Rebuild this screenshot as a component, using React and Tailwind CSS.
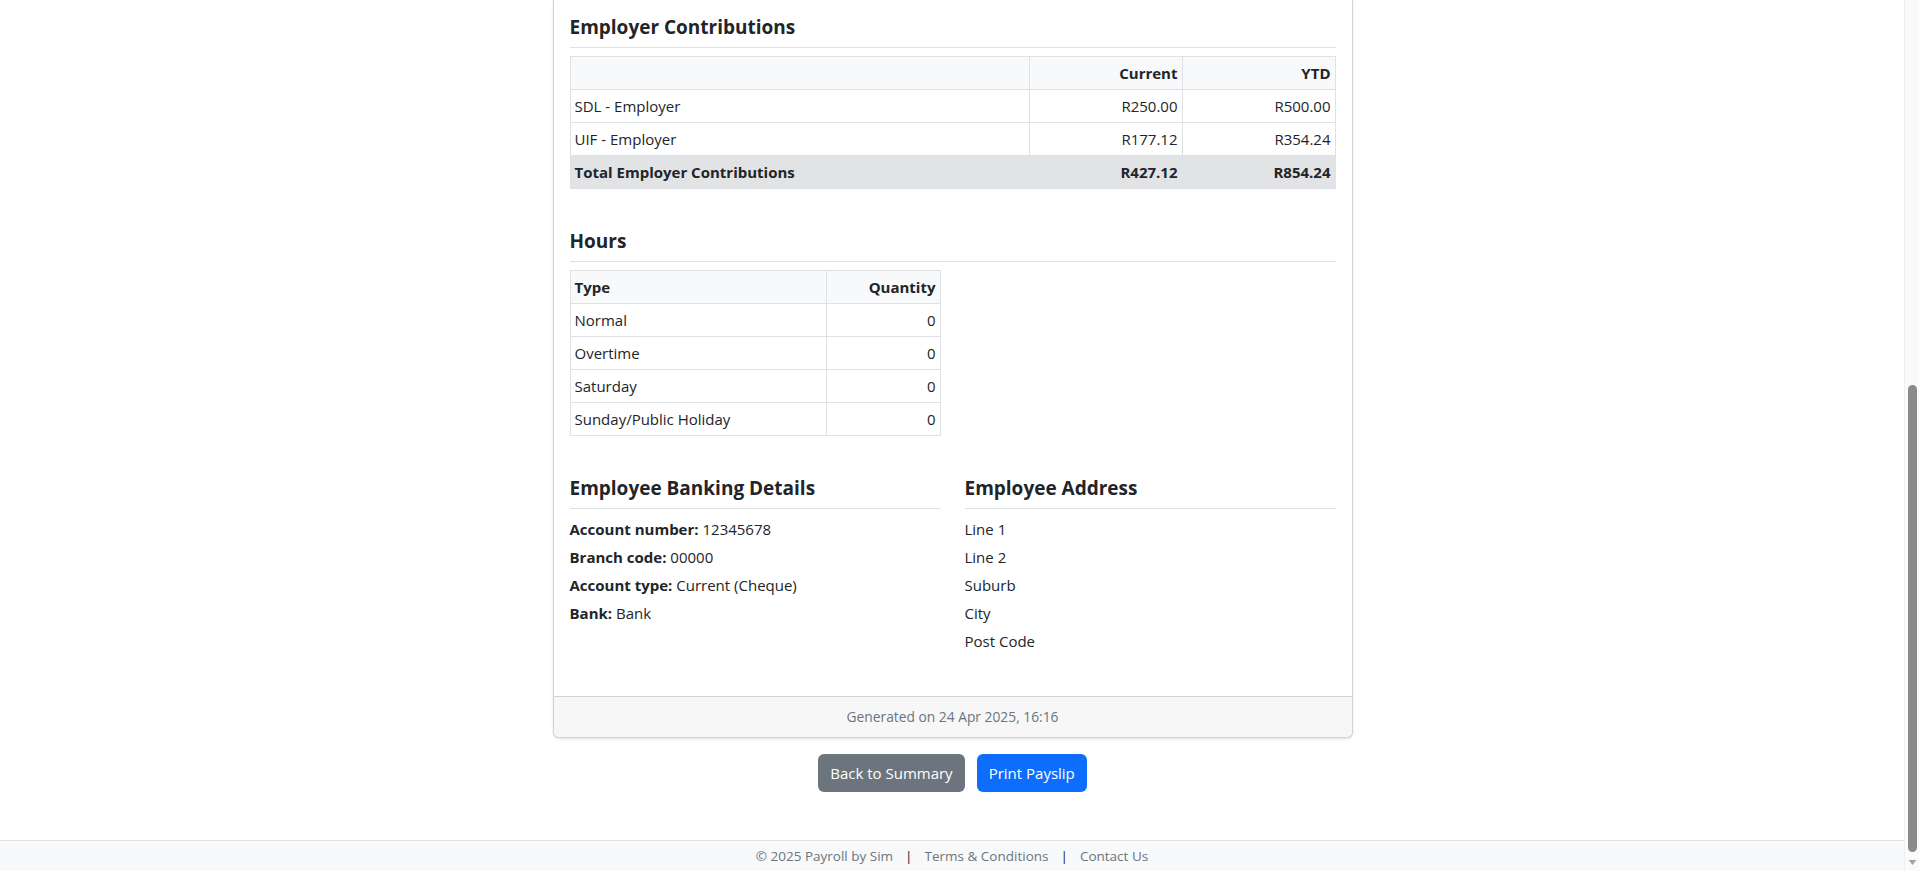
import React from 'react';

const font = { fontFamily: '"Open Sans", "Noto Sans", Arial, sans-serif' };

const contributions = [
  { label: 'SDL - Employer', current: 'R250.00', ytd: 'R500.00' },
  { label: 'UIF - Employer', current: 'R177.12', ytd: 'R354.24' },
];

const hours = ['Normal', 'Overtime', 'Saturday', 'Sunday/Public Holiday'];

const banking = [
  ['Account number:', '12345678'],
  ['Branch code:', '00000'],
  ['Account type:', 'Current (Cheque)'],
  ['Bank:', 'Bank'],
];

const address = ['Line 1', 'Line 2', 'Suburb', 'City', 'Post Code'];

function SectionTitle({ children }) {
  return (
    <h5 className="mb-2 border-b border-[#dee2e6] pb-2 text-[19px] font-bold leading-6 text-[#212529]">
      {children}
    </h5>
  );
}

const cell = 'h-[33px] border border-[#dee2e6] px-1 py-0 leading-6';

function Scrollbar() {
  return (
    <svg width="15" height="871" className="shrink-0">
      <rect x="0" y="0" width="15" height="871" fill="#fafafa" />
      <line x1="0.5" y1="0" x2="0.5" y2="871" stroke="#f0f0f0" />
      <rect x="4" y="385" width="9" height="467" rx="4.5" fill="#8a8a8a" />
      <polygon points="4.5,860 12.5,860 8.5,865" fill="#a3a3a3" />
    </svg>
  );
}

export default function App() {
  return (
    <div className="flex h-[871px] overflow-hidden bg-white text-[15px] text-[#212529]" style={font}>
      <div className="flex min-w-0 flex-1 flex-col">
        <main className="flex-1 pl-px">
          <div className="mx-auto w-[800px] rounded-b-md border border-t-0 border-[#d3d3d4] bg-white shadow-sm">
            <div className="px-4 pb-[43px] pt-[15px]">
              <SectionTitle>Employer Contributions</SectionTitle>
              <table className="mb-10 w-full table-fixed border-collapse">
                <thead>
                  <tr className="bg-[#f8f9fa]">
                    <th className={`${cell} w-[60%]`}></th>
                    <th className={`${cell} w-[20%] text-right font-bold`}>Current</th>
                    <th className={`${cell} w-[20%] text-right font-bold`}>YTD</th>
                  </tr>
                </thead>
                <tbody>
                  {contributions.map((row) => (
                    <tr key={row.label}>
                      <td className={cell}>{row.label}</td>
                      <td className={`${cell} text-right`}>{row.current}</td>
                      <td className={`${cell} text-right`}>{row.ytd}</td>
                    </tr>
                  ))}
                  <tr className="bg-[#e2e3e5] font-bold">
                    <td className={`${cell} border-[#c9cacc]`}>Total Employer Contributions</td>
                    <td className={`${cell} border-[#c9cacc] text-right`}>R427.12</td>
                    <td className={`${cell} border-[#c9cacc] text-right`}>R854.24</td>
                  </tr>
                </tbody>
              </table>

              <SectionTitle>Hours</SectionTitle>
              <table className="mb-10 w-[371px] table-fixed border-collapse">
                <thead>
                  <tr className="bg-[#f8f9fa]">
                    <th className={`${cell} w-[256px] text-left font-bold`}>Type</th>
                    <th className={`${cell} text-right font-bold`}>Quantity</th>
                  </tr>
                </thead>
                <tbody>
                  {hours.map((h) => (
                    <tr key={h}>
                      <td className={cell}>{h}</td>
                      <td className={`${cell} text-right`}>0</td>
                    </tr>
                  ))}
                </tbody>
              </table>

              <div className="grid grid-cols-2 gap-x-6">
                <div>
                  <SectionTitle>Employee Banking Details</SectionTitle>
                  {banking.map(([k, v]) => (
                    <p key={k} className="mb-1 leading-6">
                      <span className="font-bold">{k}</span> {v}
                    </p>
                  ))}
                </div>
                <div>
                  <SectionTitle>Employee Address</SectionTitle>
                  {address.map((line) => (
                    <p key={line} className="mb-1 leading-6 last:mb-0">
                      {line}
                    </p>
                  ))}
                </div>
              </div>
            </div>
            <div className="h-[41px] rounded-b-md border-t border-[#d3d3d4] bg-[#f7f7f8] text-center text-[13.8px] leading-10 text-[#6c757d]">
              Generated on 24 Apr 2025, 16:16
            </div>
          </div>

          <div className="mb-12 mt-4 flex justify-center gap-3">
            <button className="h-[38px] rounded-md bg-[#6c757d] px-3 text-[15px] text-white">Back to Summary</button>
            <button className="h-[38px] rounded-md bg-[#0d6efd] px-3 text-[15px] text-white">Print Payslip</button>
          </div>
        </main>
        <footer className="h-[31px] border-t border-[#dee2e6] bg-[#f8f9fa] text-center text-[13.5px] leading-[30px] text-[#6c757d]">
          © 2025 Payroll by Sim
          <span className="mx-3 text-[#212529]">|</span>
          Terms &amp; Conditions
          <span className="mx-3 text-[#212529]">|</span>
          Contact Us
        </footer>
      </div>
      <Scrollbar />
    </div>
  );
}
